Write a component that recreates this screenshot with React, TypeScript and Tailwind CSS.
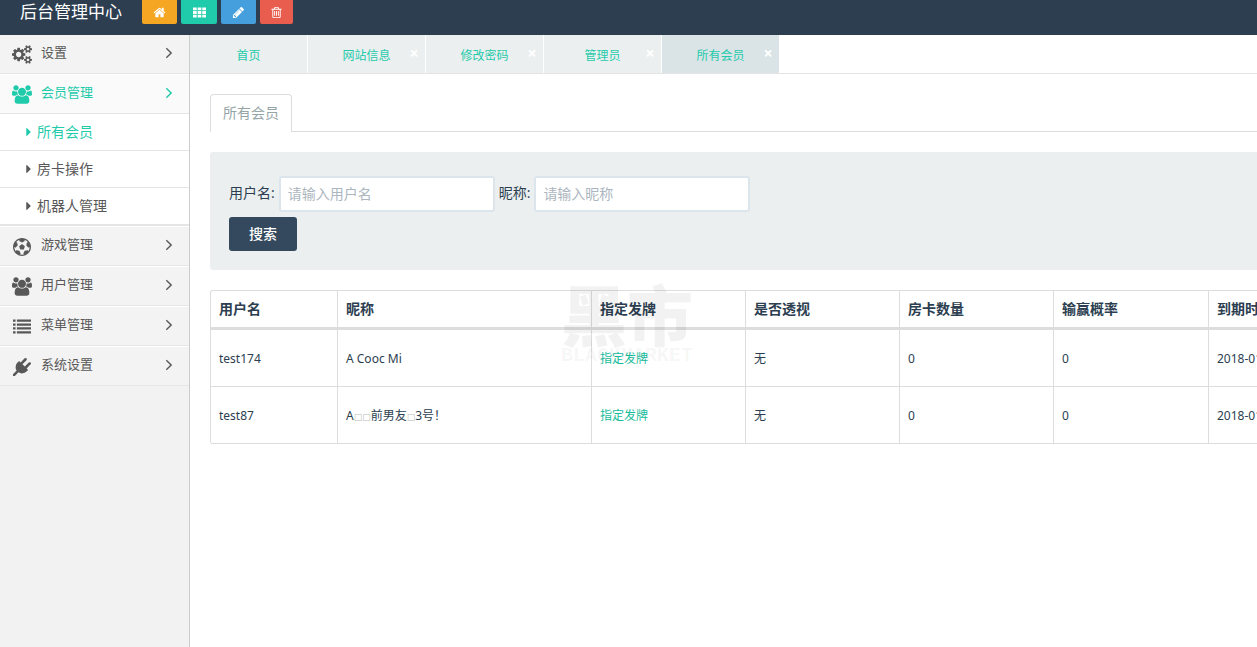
import { useState } from "react";
import clsx from "clsx";

const icons = {
  home: {
    viewBox: "0 0 1792 1792",
    d: "M1472 992v480q0 26-19 45t-45 19h-384v-384h-256v384h-384q-26 0-45-19t-19-45v-480q0-1 .5-3t.5-3l575-474 575 474q1 2 1 6zm223-69l-62 74q-8 9-21 11h-3q-13 0-21-7l-692-577-692 577q-12 8-24 7-13-2-21-11l-62-74q-8-10-7-23.5t11-21.5l719-599q32-26 76-26t76 26l244 204v-195q0-14 9-23t23-9h192q14 0 23 9t9 23v408l219 182q10 8 11 21.5t-7 23.5z",
  },
  grid: {
    viewBox: "0 0 1792 1792",
    d: "M0 192h512v384h-512zM640 192h512v384h-512zM1280 192h512v384h-512zM0 704h512v384h-512zM640 704h512v384h-512zM1280 704h512v384h-512zM0 1216h512v384h-512zM640 1216h512v384h-512zM1280 1216h512v384h-512z",
  },
  pencil: {
    viewBox: "0 0 1792 1792",
    d: "M491 1536l91-91-235-235-91 91v107h128v128h107zm523-928q0-22-22-22-10 0-17 7l-542 542q-7 7-7 17 0 22 22 22 10 0 17-7l542-542q7-7 7-17zm-54-192l416 416-832 832h-416v-416zm683 96q0 53-37 90l-166 166-416-416 166-165q36-38 90-38 53 0 91 38l235 234q37 39 37 91z",
  },
  trash: {
    viewBox: "0 0 1792 1792",
    d: "M704 736v576q0 14-9 23t-23 9h-64q-14 0-23-9t-9-23v-576q0-14 9-23t23-9h64q14 0 23 9t9 23zm256 0v576q0 14-9 23t-23 9h-64q-14 0-23-9t-9-23v-576q0-14 9-23t23-9h64q14 0 23 9t9 23zm256 0v576q0 14-9 23t-23 9h-64q-14 0-23-9t-9-23v-576q0-14 9-23t23-9h64q14 0 23 9t9 23zm128 724v-948h-896v948q0 22 7 40.5t14.5 27 10.5 8.5h832q3 0 10.5-8.5t14.5-27 7-40.5zm-672-1076h448l-48-117q-7-9-17-11h-317q-10 2-17 11zm928 32v64q0 14-9 23t-23 9h-96v948q0 83-47 143.5t-113 60.5h-832q-66 0-113-58.5t-47-141.5v-952h-96q-14 0-23-9t-9-23v-64q0-14 9-23t23-9h309l70-167q15-37 54-63t79-26h320q40 0 79 26t54 63l70 167h309q14 0 23 9t9 23z",
  },
  cogs: {
    viewBox: "0 0 1920 1792",
    d: "M896 896q0-106-75-181t-181-75-181 75-75 181 75 181 181 75 181-75 75-181zm768 512q0-52-38-90t-90-38-90 38-38 90q0 53 37.5 90.5t90.5 37.5 90.5-37.5 37.5-90.5zm0-1024q0-52-38-90t-90-38-90 38-38 90q0 53 37.5 90.5t90.5 37.5 90.5-37.5 37.5-90.5zm-384 421v185q0 10-7 19.5t-16 10.5l-155 24q-11 35-32 76 34 48 90 115 7 11 7 20 0 12-7 19-23 30-82.5 89.5t-78.5 59.5q-11 0-21-7l-115-90q-37 19-77 31-11 108-23 155-7 24-30 24h-186q-11 0-20-7.5t-10-17.5l-23-153q-34-10-75-31l-118 89q-7 7-20 7-11 0-21-8-144-133-144-160 0-9 7-19 10-14 41-53t47-61q-23-44-35-82l-152-24q-10-1-17-9.5t-7-19.5v-185q0-10 7-19.5t16-10.5l155-24q11-35 32-76-34-48-90-115-7-11-7-20 0-12 7-20 22-30 82-89t79-59q11 0 21 7l115 90q34-18 77-32 11-108 23-154 7-24 30-24h186q11 0 20 7.5t10 17.5l23 153q34 10 75 31l118-89q8-7 20-7 11 0 21 8 144 133 144 160 0 8-7 19-12 16-42 54t-45 60q23 48 34 82l152 23q10 2 17 10.5t7 19.5zm640 533v140q0 16-149 31-12 27-30 52 51 113 51 138 0 4-4 7-122 71-124 71-8 0-46-47t-52-68q-20 2-30 2t-30-2q-14 21-52 68t-46 47q-2 0-124-71-4-3-4-7 0-25 51-138-18-25-30-52-149-15-149-31v-140q0-16 149-31 13-29 30-52-51-113-51-138 0-4 4-7 4-2 35-20t59-34 30-16q8 0 46 46.5t52 67.5q20-2 30-2t30 2q51-71 92-112l6-2q4 0 124 70 4 3 4 7 0 25-51 138 17 23 30 52 149 15 149 31zm0-1024v140q0 16-149 31-12 27-30 52 51 113 51 138 0 4-4 7-122 71-124 71-8 0-46-47t-52-68q-20 2-30 2t-30-2q-14 21-52 68t-46 47q-2 0-124-71-4-3-4-7 0-25 51-138-18-25-30-52-149-15-149-31v-140q0-16 149-31 13-29 30-52-51-113-51-138 0-4 4-7 4-2 35-20t59-34 30-16q8 0 46 46.5t52 67.5q20-2 30-2t30 2q51-71 92-112l6-2q4 0 124 70 4 3 4 7 0 25-51 138 17 23 30 52 149 15 149 31z",
  },
  users: {
    viewBox: "-64 0 1920 1792",
    d: "M529 896q-162 5-265 128h-134q-82 0-138-40.5t-56-118.5q0-353 124-353 6 0 43.5 21t97.5 42.5 119 21.5q67 0 133-23-5 37-5 66 0 139 81 256zm1071 637q0 120-73 189.5t-194 69.5h-874q-121 0-194-69.5t-73-189.5q0-53 3.5-103.5t14-109 26.5-108.5 43-97.5 62-81 85.5-53.5 111.5-20q10 0 43 21.5t73 48 107 48 135 21.5 135-21.5 107-48 73-48 43-21.5q61 0 111.5 20t85.5 53.5 62 81 43 97.5 26.5 108.5 14 109 3.5 103.5zm-1024-1277q0 106-75 181t-181 75-181-75-75-181 75-181 181-75 181 75 75 181zm704 384q0 159-112.5 271.5t-271.5 112.5-271.5-112.5-112.5-271.5 112.5-271.5 271.5-112.5 271.5 112.5 112.5 271.5zm576 225q0 78-56 118.5t-138 40.5h-134q-103-123-265-128 81-117 81-256 0-29-5-66 66 23 133 23 59 0 119-21.5t97.5-42.5 43.5-21q124 0 124 353zm-128-609q0 106-75 181t-181 75-181-75-75-181 75-181 181-75 181 75 75 181z",
  },
  ball: {
    viewBox: "0 0 1792 1792",
    d: "M609 816l287-208 287 208-109 336h-355zm287-816q182 0 348 71t286 191 191 286 71 348-71 348-191 286-286 191-348 71-348-71-286-191-191-286-71-348 71-348 191-286 286-191 348-71zm619 1350q149-203 149-454v-3l-102 89-240-224 63-323 134 12q-150-206-389-282l53 124-287 159-287-159 53-124q-239 76-389 282l135-12 62 323-240 224-102-89v3q0 251 149 454l30-132 326 40 139 298-116 69q117 39 240 39t240-39l-116-69 139-298 326-40z",
  },
  list: {
    viewBox: "0 0 1792 1792",
    d: "M0 160h256v224h-256zM0 544h256v224h-256zM0 928h256v224h-256zM0 1312h256v224h-256zM384 160h1408v224h-1408zM384 544h1408v224h-1408zM384 928h1408v224h-1408zM384 1312h1408v224h-1408z",
  },
  plug: {
    viewBox: "0 0 1792 1792",
    d: "M1755 453q37 38 37 90.5t-37 90.5l-401 400 150 150-160 160q-163 163-389.5 186.5t-411.5-100.5l-362 362h-181v-181l362-362q-124-185-100.5-411.5t186.5-389.5l160-160 150 150 400-401q38-37 91-37t90 37 37 90.5-37 90.5l-400 401 234 234 401-400q38-37 91-37t90 37z",
  },
  angle: {
    viewBox: "544 320 672 1152",
    d: "M1171 896q0 13-10 23l-466 466q-10 10-23 10t-23-10l-50-50q-10-10-10-23t10-23l393-393-393-393q-10-10-10-23t10-23l50-50q10-10 23-10t23 10l466 466q10 10 10 23z",
  },
  caret: {
    viewBox: "576 384 576 1024",
    d: "M1152 896q0 26-19 45l-448 448q-19 19-45 19t-45-19-19-45v-896q0-26 19-45t45-19 45 19l448 448q19 19 19 45z",
  },
};

type IconName = keyof typeof icons;

const Icon = ({ name, className }: { name: IconName; className: string }) => (
  <svg
    viewBox={icons[name].viewBox}
    className={clsx("shrink-0 fill-current", className)}
    aria-hidden="true"
  >
    <path d={icons[name].d} />
  </svg>
);

const shortcuts: { icon: IconName; label: string; color: string }[] = [
  { icon: "home", label: "首页", color: "w-[35px] bg-[#f5a623]" },
  { icon: "grid", label: "菜单", color: "w-[36px] bg-[#1fcbab]" },
  { icon: "pencil", label: "编辑", color: "w-[35px] bg-[#459fdd]" },
  { icon: "trash", label: "清除", color: "w-[33px] bg-[#e95d4e]" },
];

const menu: { icon: IconName; label: string; children?: string[] }[] = [
  { icon: "cogs", label: "设置" },
  {
    icon: "users",
    label: "会员管理",
    children: ["所有会员", "房卡操作", "机器人管理"],
  },
  { icon: "ball", label: "游戏管理" },
  { icon: "users", label: "用户管理" },
  { icon: "list", label: "菜单管理" },
  { icon: "plug", label: "系统设置" },
];

const tabs = ["首页", "网站信息", "修改密码", "管理员", "所有会员"];

const columns = [
  "用户名",
  "昵称",
  "指定发牌",
  "是否透视",
  "房卡数量",
  "输赢概率",
  "到期时间",
];

const members = [
  { user: "test174", nick: "A Cooc Mi", expires: "2018-01-01" },
  { user: "test87", nick: "A□□前男友□3号！", expires: "2018-01-01" },
];

const Header = () => (
  <header className="flex h-[35px] shrink-0 items-start bg-[#2c3e50] pl-5">
    <h1 className="mr-5 text-[17px] leading-6 whitespace-nowrap text-white">
      后台管理中心
    </h1>
    <div className="flex gap-1">
      {shortcuts.map((item) => (
        <button
          key={item.icon}
          type="button"
          aria-label={item.label}
          className={clsx(
            "flex h-6 items-center justify-center rounded-b-[2px] pt-px text-white",
            item.color
          )}
        >
          <Icon name={item.icon} className="size-[13px]" />
        </button>
      ))}
    </div>
  </header>
);

const Sidebar = () => {
  const [open, setOpen] = useState("会员管理");

  return (
    <nav className="w-[190px] shrink-0 border-r border-[#ccc] bg-[#f2f2f2] text-[#585858]">
      <ul>
        {menu.map((item) => {
          const active = open === item.label;
          return (
            <li
              key={item.label}
              className="border-t border-white first:border-t-0"
            >
              <button
                type="button"
                onClick={() => setOpen(item.label)}
                className={clsx(
                  "flex h-[39px] w-full items-center border-b border-[#e5e5e5] pr-4 pb-0.5 pl-3 text-[13px]",
                  active ? "bg-[#fafafa] text-[#1fcbab]" : "bg-[#f3f3f3]"
                )}
              >
                <Icon
                  name={item.icon}
                  className={clsx(
                    "mt-[3px] w-5",
                    item.icon === "cogs" || item.icon === "users"
                      ? "h-[19px]"
                      : "h-[18px]"
                  )}
                />
                <span className="ml-[9px]">{item.label}</span>
                <Icon name="angle" className="ml-auto h-3 w-2" />
              </button>
              {active && item.children && (
                <ul className="border-b border-[#e5e5e5] bg-white">
                  {item.children.map((child, index) => (
                    <li key={child} className="border-b border-[#e5e5e5]">
                      <a
                        href="#members"
                        className={clsx(
                          "flex h-9 items-center gap-1.5 pl-[26px] text-sm",
                          index === 0 && "text-[#1fcbab]"
                        )}
                      >
                        <Icon name="caret" className="h-2 w-[5px]" />
                        {child}
                      </a>
                    </li>
                  ))}
                </ul>
              )}
            </li>
          );
        })}
      </ul>
    </nav>
  );
};

const PageTabs = () => (
  <div className="flex h-[39px] border-b border-[#e4e4e4] text-xs">
    {tabs.map((tab, index) => (
      <div
        key={tab}
        className={clsx(
          "relative w-[118px] border-r border-white",
          index === tabs.length - 1 ? "bg-[#dae3e6]" : "bg-[#ebefef]"
        )}
      >
        <a
          href="#tab"
          className="flex h-full items-center justify-center pt-[3px] text-[#1fcbab]"
        >
          {tab}
        </a>
        {index > 0 && (
          <button
            type="button"
            aria-label={`关闭${tab}`}
            className="absolute top-2 right-px size-5 text-base leading-5 font-bold text-white"
          >
            ×
          </button>
        )}
      </div>
    ))}
  </div>
);

const Field = ({
  id,
  label,
  placeholder,
}: {
  id: string;
  label: string;
  placeholder: string;
}) => (
  <div className="flex items-center gap-1">
    <label htmlFor={id} className="pb-0.5">
      {label}
    </label>
    <input
      id={id}
      type="text"
      placeholder={placeholder}
      className="h-9 w-[216px] rounded-[3px] border-2 border-[#dce4ec] bg-white px-[7px] pb-0.5 text-sm placeholder:text-[#acb6c0]"
    />
  </div>
);

const SearchForm = () => (
  <form
    onSubmit={(e) => e.preventDefault()}
    className="mt-5 rounded-l-[3px] bg-[#ebefef] px-[19px] pt-6 pb-[19px] text-sm"
  >
    <div className="flex gap-1">
      <Field id="username" label="用户名:" placeholder="请输入用户名" />
      <Field id="nickname" label="昵称:" placeholder="请输入昵称" />
    </div>
    <button
      type="submit"
      className="mt-[5px] h-[34px] rounded-[3px] bg-[#34495e] px-5 font-medium text-white"
    >
      搜索
    </button>
  </form>
);

// Missing glyphs in a nickname show up as small faint boxes.
const Nickname = ({ value }: { value: string }) => (
  <>
    {value.split(/(□)/).map((part, index) =>
      part === "□" ? (
        <span key={index} className="font-['DejaVu_Sans'] text-[9px] text-[#bbb]">
          {part}
        </span>
      ) : (
        part
      )
    )}
  </>
);

const MemberTable = () => (
  <div className="relative mt-5">
    <table className="w-[1160px] table-fixed border-separate border-spacing-0 rounded-[3px] border-t border-l border-[#ddd] text-left">
      <colgroup>
        <col className="w-[127px]" />
        <col className="w-[254px]" />
        <col className="w-[154px]" />
        <col className="w-[154px]" />
        <col className="w-[154px]" />
        <col className="w-[155px]" />
        <col />
      </colgroup>
      <thead>
        <tr>
          {columns.map((column) => (
            <th
              key={column}
              className="h-[39px] border-r border-b-3 border-[#ddd] px-2 text-sm font-bold"
            >
              {column}
            </th>
          ))}
        </tr>
      </thead>
      <tbody className="font-['Noto_Sans','Noto_Sans_CJK_SC',sans-serif] text-xs">
        {members.map((member) => (
          <tr
            key={member.user}
            className="*:h-[57px] *:border-r *:border-b *:border-[#ddd] *:px-2 *:pt-0.5"
          >
            <td>{member.user}</td>
            <td>
              <Nickname value={member.nick} />
            </td>
            <td>
              <a href="#deal" className="text-[#18bc9c]">
                指定发牌
              </a>
            </td>
            <td>无</td>
            <td>0</td>
            <td>0</td>
            <td>{member.expires}</td>
          </tr>
        ))}
      </tbody>
    </table>
    <div className="pointer-events-none absolute -top-3 left-[351px] flex flex-col items-center font-bold text-black/5">
      <span className="font-['Noto_Sans_CJK_SC'] text-[66px] leading-[68px] font-black">
        黑市
      </span>
      <span className="font-['Liberation_Mono'] text-[20px] leading-5">
        BLACKMARKET
      </span>
    </div>
  </div>
);

const App = () => {
  return (
    <div className="flex min-h-screen flex-col overflow-hidden bg-white font-['Open_Sans','Noto_Sans_CJK_SC',sans-serif] text-[#2c3e50]">
      <Header />
      <div className="flex grow">
        <Sidebar />
        <main className="min-w-0 flex-1 overflow-hidden">
          <PageTabs />
          <div className="pt-5 pl-5">
            <div className="flex border-b border-[#ddd]">
              <a
                href="#members"
                className="-mb-px flex h-[38px] items-center rounded-t-[4px] border border-b-0 border-[#ddd] bg-white px-3 pb-0.5 text-sm text-[#95a5a6]"
              >
                所有会员
              </a>
            </div>
            <SearchForm />
            <MemberTable />
          </div>
        </main>
      </div>
    </div>
  );
};

export default App;
